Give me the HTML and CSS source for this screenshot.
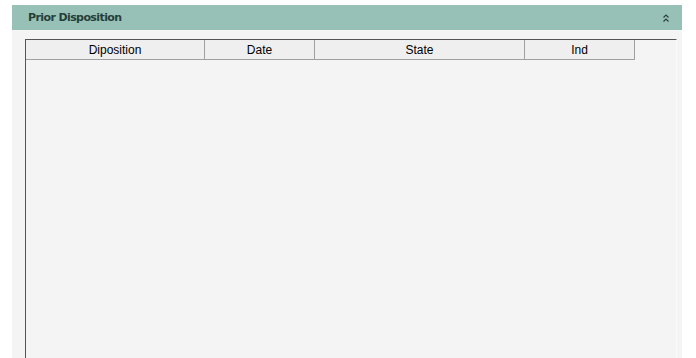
FILE: index.html
```html
<!DOCTYPE html>
<html>
<head>
<meta charset="utf-8">
<link rel="stylesheet" href="styles.css">
</head>
<body>
<div class="panel">
  <div class="panel-header">
    <span class="panel-title">Prior Disposition</span>
    <svg class="collapse" width="6" height="8" viewBox="0 0 6 8">
      <path d="M0.5 3.5 L3 1 L5.5 3.5 M0.5 7.5 L3 5 L5.5 7.5" fill="none" stroke="#2c3e3a" stroke-width="1.2"/>
    </svg>
  </div>
  <div class="panel-body">
    <div class="grid">
      <div class="grid-head">
        <div class="col c1">Diposition</div>
        <div class="col c2">Date</div>
        <div class="col c3">State</div>
        <div class="col c4">Ind</div>
      </div>
    </div>
  </div>
</div>
</body>
</html>
```

FILE: styles.css
```css
html, body {
  margin: 0;
  padding: 0;
  background: #ffffff;
}
body {
  padding: 5px 14px 0 12px;
  font-family: "Liberation Sans", Arial, sans-serif;
}
.panel {
  width: 670px;
}
.panel-header {
  height: 25px;
  background: #97c1b6;
  display: flex;
  align-items: center;
  justify-content: space-between;
  padding: 0 13px 0 16px;
  box-sizing: border-box;
}
.panel-title {
  font-family: "DejaVu Sans", Verdana, sans-serif;
  font-weight: bold;
  font-size: 11px;
  color: #263f3a;
  letter-spacing: -0.6px;
}
.collapse {
  display: block;
}
.panel-body {
  background: #f4f4f4;
  height: 328px;
  padding: 9px 0 0 13px;
  box-sizing: border-box;
}
.grid {
  width: 652px;
  height: 319px;
  box-sizing: border-box;
  border-top: 1px solid #555555;
  border-left: 1px solid #555555;
  border-right: 1px solid #fafafa;
}
.grid-head {
  display: flex;
  height: 20px;
}
.col {
  box-sizing: border-box;
  height: 20px;
  background: #efefef;
  border-right: 1px solid #a0a0a0;
  border-bottom: 1px solid #a0a0a0;
  font-size: 12px;
  color: #000;
  display: flex;
  align-items: center;
  justify-content: center;
  padding-top: 1px;
}
.c1 { width: 179px; }
.c2 { width: 110px; }
.c3 { width: 210px; }
.c4 { width: 110px; }
```
